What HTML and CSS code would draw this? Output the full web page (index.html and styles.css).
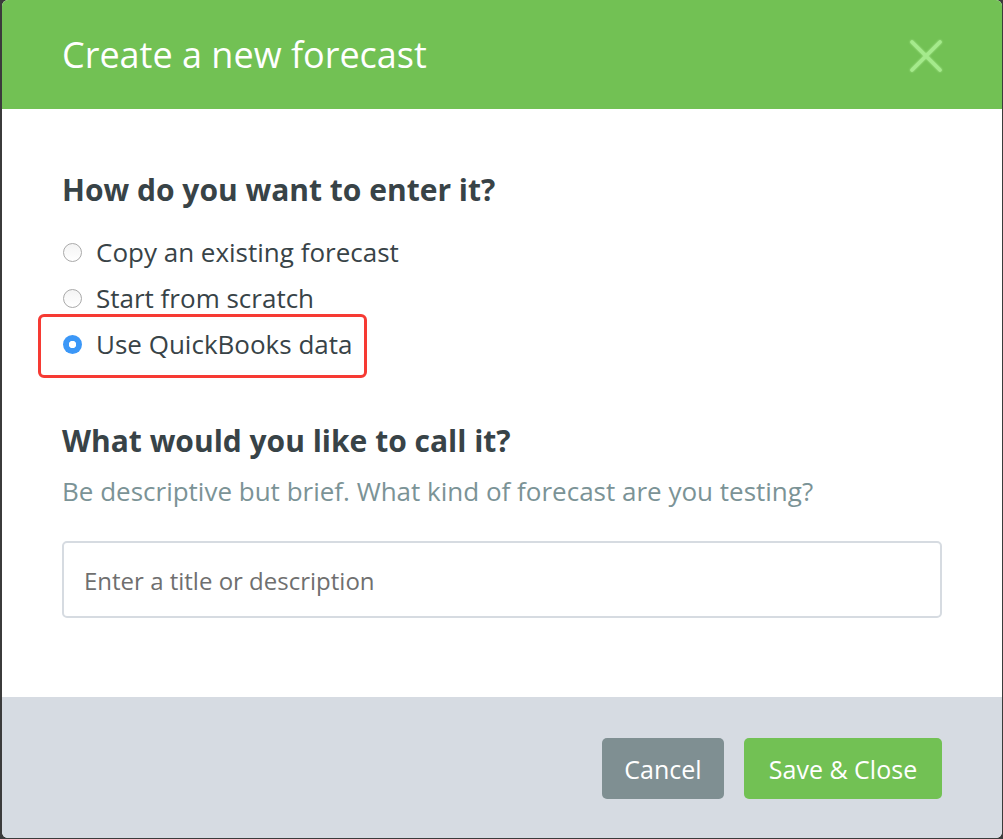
FILE: index.html
```html
<!DOCTYPE html>
<html lang="en">
<head>
<meta charset="utf-8">
<title>Create a new forecast</title>
<link rel="stylesheet" href="styles.css">
</head>
<body>
<div class="backdrop">
  <div class="modal">
    <header class="modal-header">
      <h1 class="modal-title">Create a new forecast</h1>
      <button class="close-btn" aria-label="Close">
        <svg width="32" height="32" viewBox="0 0 32 32"><path d="M2 2 L30 30 M30 2 L2 30" stroke="#a5ea8c" stroke-width="3.6" stroke-linecap="round" fill="none"/></svg>
      </button>
    </header>
    <main class="modal-body">
      <h2 class="section-title">How do you want to enter it?</h2>
      <div class="options">
        <label class="option"><span class="radio"></span><span class="option-text">Copy an existing forecast</span></label>
        <label class="option"><span class="radio"></span><span class="option-text">Start from scratch</span></label>
        <label class="option option-highlight"><span class="radio radio-checked"></span><span class="option-text">Use QuickBooks data</span></label>
      </div>
      <h2 class="section-title second">What would you like to call it?</h2>
      <p class="hint">Be descriptive but brief. What kind of forecast are you testing?</p>
      <div class="input-box"><span class="placeholder">Enter a title or description</span></div>
    </main>
    <footer class="modal-footer">
      <button class="btn btn-cancel">Cancel</button>
      <button class="btn btn-save">Save &amp; Close</button>
    </footer>
  </div>
</div>
</body>
</html>
```
FILE: styles.css
```css
html, body {
  margin: 0;
  padding: 0;
  background: #3b3b3b;
}
body {
  font-family: "Open Sans", "Liberation Sans", sans-serif;
  width: 1003px;
  height: 839px;
  overflow: hidden;
}
.backdrop {
  display: flex;
  padding-left: 2px;
  height: 839px;
  box-sizing: border-box;
}
.modal {
  width: 1000px;
  height: 838px;
  background: #ffffff;
  border-radius: 6px;
  overflow: hidden;
  display: flex;
  flex-direction: column;
}
.modal-header {
  height: 109px;
  flex: none;
  background: #72c154;
  display: flex;
  align-items: center;
  justify-content: space-between;
  padding: 0 60px;
}
.modal-title {
  margin: 0;
  color: #ffffff;
  font-size: 36px;
  font-weight: 400;
  line-height: 49px;
  padding-bottom: 1px;
}
.close-btn {
  border: 0;
  background: none;
  padding: 0;
  width: 32px;
  height: 32px;
  display: flex;
  margin-top: 3px;
}
.close-btn svg {
  filter: drop-shadow(0 0 1px rgba(200, 255, 180, 0.6));
}
.modal-body {
  flex: 1;
  padding: 64px 60px 0;
  display: flex;
  flex-direction: column;
}
.section-title {
  margin: 0 0 22px;
  font-size: 30px;
  line-height: 34px;
  font-weight: 700;
  color: #384347;
}
.section-title.second {
  margin: 57px 0 17px;
}
.options {
  display: flex;
  flex-direction: column;
}
.option {
  display: flex;
  align-items: center;
  height: 46px;
  font-size: 26px;
  color: #384347;
  align-self: flex-start;
  position: relative;
}
.radio {
  width: 17px;
  height: 17px;
  border-radius: 50%;
  border: 1px solid #a9a9a9;
  background: linear-gradient(#f4f4f4, #ffffff);
  box-sizing: content-box;
  margin: 1px 14px 0 1px;
  flex: none;
}
.radio-checked {
  width: 19px;
  height: 19px;
  border: 0;
  background: radial-gradient(circle, #ffffff 0 3.4px, #3b97f7 4px);
}
.option-highlight::after {
  content: "";
  position: absolute;
  left: -24px;
  top: -7px;
  width: 323px;
  height: 58px;
  border: 3px solid #f63a33;
  border-radius: 6px;
  pointer-events: none;
}
.hint {
  margin: 0 0 34px;
  font-size: 26px;
  line-height: 32px;
  color: #7b9396;
}
.input-box {
  height: 73px;
  border: 2px solid #d6dbe1;
  border-radius: 5px;
  display: flex;
  align-items: center;
  padding: 0 20px;
}
.placeholder {
  font-size: 24px;
  color: #6f6f6f;
  padding-top: 2px;
}
.modal-footer {
  height: 141px;
  flex: none;
  background: #d6dbe2;
  box-sizing: border-box;
  padding: 41px 60px 0;
  display: flex;
  justify-content: flex-end;
  align-items: flex-start;
  gap: 20px;
}
.btn {
  height: 61px;
  border: 0;
  border-radius: 5px;
  color: #ffffff;
  font-family: "Open Sans", "Liberation Sans", sans-serif;
  font-size: 25px;
  font-weight: 500;
  padding: 0;
}
.btn-cancel {
  width: 122px;
  background: #7f8f92;
}
.btn-save {
  width: 198px;
  background: #72c154;
}
```
